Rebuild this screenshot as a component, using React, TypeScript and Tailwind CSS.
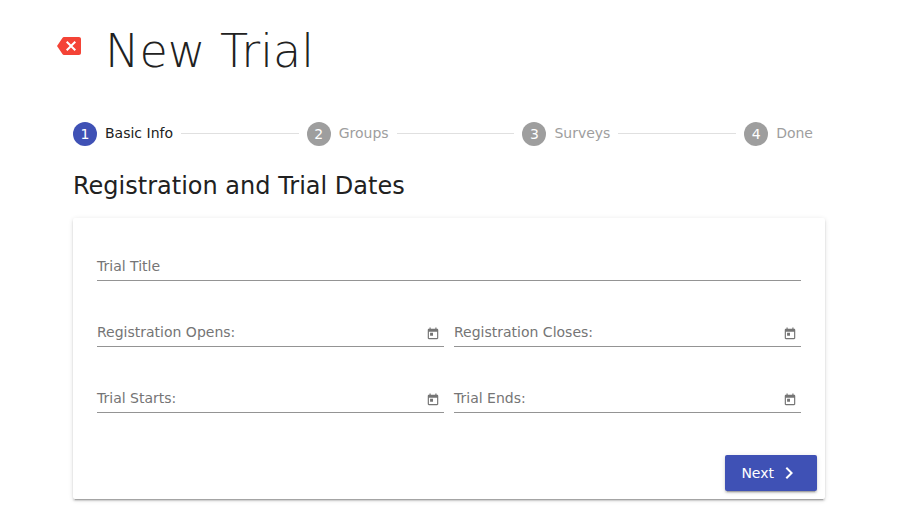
import { Fragment } from "react";

const steps = ["Basic Info", "Groups", "Surveys", "Done"];

const elevation =
  "shadow-[0_3px_1px_-2px_rgba(0,0,0,0.2),0_2px_2px_0_rgba(0,0,0,0.14),0_1px_5px_0_rgba(0,0,0,0.12)]";

function CalendarIcon() {
  return (
    <svg viewBox="0 0 24 24" className="size-3.5 fill-[#757575]" aria-hidden="true">
      <path d="M19 3h-1V1h-2v2H8V1H6v2H5c-1.11 0-1.99.9-1.99 2L3 19c0 1.1.89 2 2 2h14c1.1 0 2-.9 2-2V5c0-1.1-.9-2-2-2zm0 16H5V8h14v11zM7 10h5v5H7z" />
    </svg>
  );
}

function TextField({ id, label, date = false }: { id: string; label: string; date?: boolean }) {
  return (
    <div className="relative flex h-7 w-full min-w-0 border-b border-[#949494]">
      <label htmlFor={id} className="pointer-events-none absolute left-0 top-1 text-sm leading-[18px] text-[#757575]">
        {label}
      </label>
      <input id={id} type="text" className="min-w-0 flex-1 bg-transparent text-sm outline-none" />
      {date && (
        <button type="button" aria-label={`Pick date for ${label}`} className="flex w-[22px] items-center justify-center pt-0.5">
          <CalendarIcon />
        </button>
      )}
    </div>
  );
}

export default function App() {
  return (
    <main className="min-h-screen bg-white px-12 font-['DejaVu_Sans',sans-serif] text-[#212121]">
      <header className="flex items-center gap-[22px] pt-[18px]">
        <button type="button" aria-label="Cancel" className="mb-2 ml-[7px] flex size-7 items-center justify-center">
          <svg viewBox="0 0 24 24" className="size-6 fill-[#f44336]" aria-hidden="true">
            <path d="M22 3H7c-.69 0-1.23.35-1.59.88L0 12l5.41 8.11c.36.53.9.89 1.59.89h15c1.1 0 2-.9 2-2V5c0-1.1-.9-2-2-2zm-3 12.59L17.59 17 14 13.41 10.41 17 9 15.59 12.59 12 9 8.41 10.41 7 14 10.59 17.59 7 19 8.41 15.41 12 19 15.59z" />
          </svg>
        </button>
        <h1 className="pt-0.5 text-[46px] font-extralight leading-[62px]">New Trial</h1>
      </header>
      <div className="px-[25px] pt-10">
        <ol className="flex items-center gap-2 pr-3 text-sm">
          {steps.map((step, i) => (
            <Fragment key={step}>
              {i > 0 && <li aria-hidden="true" className="mb-0.5 h-px flex-1 bg-[#e0e0e0]" />}
              <li className={`flex gap-2 leading-[22px] ${i === 0 ? "text-[#212121]" : "text-[#9e9e9e]"}`}>
                <span className={`flex size-6 items-center justify-center rounded-full text-white ${i === 0 ? "bg-[#3f51b5]" : "bg-[#9e9e9e]"}`}>
                  {i + 1}
                </span>
                {step}
              </li>
            </Fragment>
          ))}
        </ol>
        <h2 className="pt-6 text-2xl leading-8">Registration and Trial Dates</h2>
        <form className={`mt-4 rounded-xs bg-white ${elevation}`}>
          <div className="flex flex-col gap-[38px] px-6 pt-[35px]">
            <TextField id="title" label="Trial Title" />
            <div className="flex gap-2.5">
              <TextField id="opens" label="Registration Opens:" date />
              <TextField id="closes" label="Registration Closes:" date />
            </div>
            <div className="flex gap-2.5">
              <TextField id="starts" label="Trial Starts:" date />
              <TextField id="ends" label="Trial Ends:" date />
            </div>
          </div>
          <div className="flex justify-end px-2 pb-2 pt-[42px]">
            <button type="button" className={`flex h-9 items-center gap-[3px] rounded-xs bg-[#3f51b5] px-4 text-sm text-white ${elevation}`}>
              Next
              <svg viewBox="0 0 24 24" className="size-6 fill-white" aria-hidden="true">
                <path d="M10 6L8.59 7.41 13.17 12l-4.58 4.59L10 18l6-6z" />
              </svg>
            </button>
          </div>
        </form>
      </div>
    </main>
  );
}
